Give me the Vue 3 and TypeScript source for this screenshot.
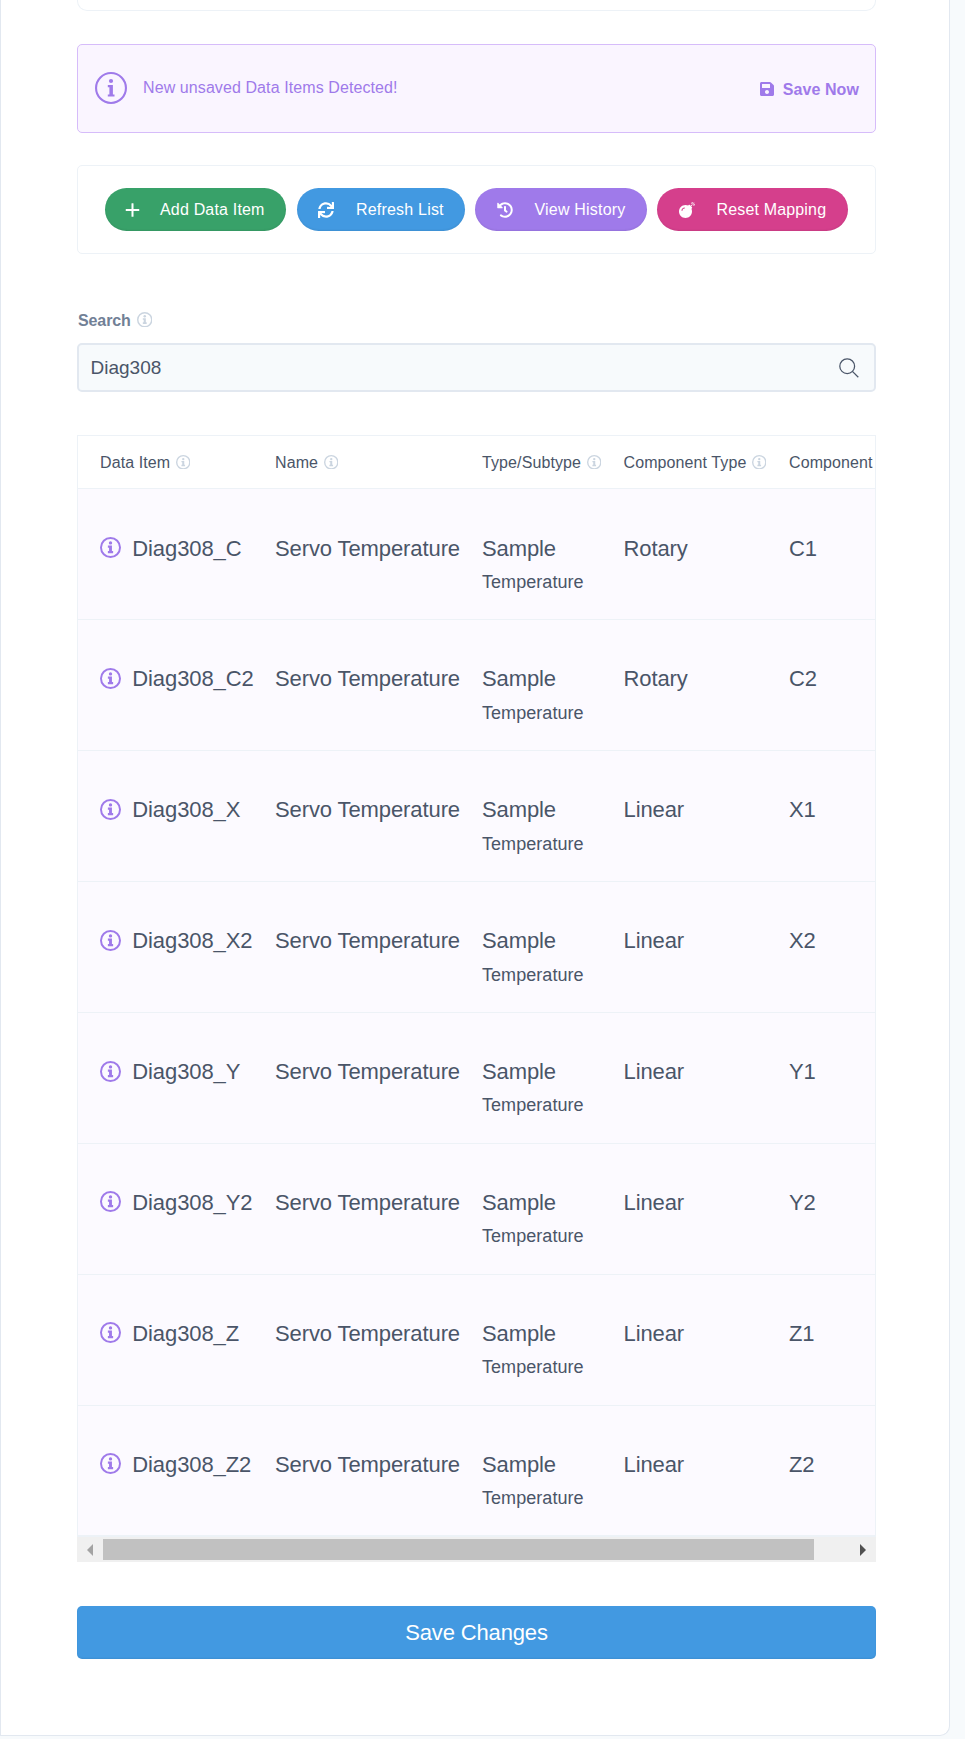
<script setup lang="ts">
import { h, type FunctionalComponent } from 'vue'

interface Action { label: string; icon: string; tone: string }
interface DataItem { id: string; type: string; component: string }

const icons: Record<string, string> = {
  plus: 'M416 226H254V64a12 12 0 0 0-12-12h-36a12 12 0 0 0-12 12v162H32a12 12 0 0 0-12 12v36a12 12 0 0 0 12 12h162v162a12 12 0 0 0 12 12h36a12 12 0 0 0 12-12V286h162a12 12 0 0 0 12-12v-36a12 12 0 0 0-12-12z',
  refresh: 'M440.65 12.57l4 82.77A247.16 247.16 0 0 0 255.83 8C134.73 8 33.91 94.92 12.29 209.82A12 12 0 0 0 24.09 224h49.05a12 12 0 0 0 11.67-9.26 175.91 175.91 0 0 1 317-56.94l-101.46-4.86a12 12 0 0 0-12.57 12v47.41a12 12 0 0 0 12 12H500a12 12 0 0 0 12-12V12a12 12 0 0 0-12-12h-47.37a12 12 0 0 0-11.98 12.57zM255.83 432a175.61 175.61 0 0 1-146-77.8l101.8 4.87a12 12 0 0 0 12.57-12v-47.4a12 12 0 0 0-12-12H12a12 12 0 0 0-12 12V500a12 12 0 0 0 12 12h47.35a12 12 0 0 0 12-12.6l-4.15-82.57A247.17 247.17 0 0 0 255.83 504c121.11 0 221.93-86.92 243.55-201.82a12 12 0 0 0-11.8-14.18h-49.05a12 12 0 0 0-11.67 9.26A175.86 175.86 0 0 1 255.83 432z',
  history: 'M504 255.531c.253 136.64-111.18 248.372-247.82 248.468-59.015.042-113.223-20.53-155.822-54.911-11.077-8.94-11.905-25.541-1.839-35.607l11.267-11.267c8.609-8.609 22.353-9.551 31.891-1.984C173.062 425.135 212.781 440 256 440c101.705 0 184-82.311 184-184 0-101.705-82.311-184-184-184-48.814 0-93.149 18.969-126.068 49.932l50.754 50.754c10.08 10.08 2.941 27.314-11.313 27.314H24c-8.837 0-16-7.163-16-16V38.627c0-14.254 17.234-21.393 27.314-11.314l49.372 49.372C129.209 34.136 189.552 8 256 8c136.81 0 247.747 110.78 248 247.531zm-180.912 78.784l9.823-12.63c8.138-10.463 6.253-25.542-4.21-33.679L288 256.349V152c0-13.255-10.745-24-24-24h-16c-13.255 0-24 10.745-24 24v135.651l65.409 50.874c10.463 8.137 25.541 6.253 33.679-4.21z',
  bomb: 'M440.5 88.5l-52 52L415 167c9.4 9.4 9.4 24.6 0 33.9l-17.4 17.4c11.8 26.1 18.4 55.1 18.4 85.6 0 114.9-93.1 208-208 208S0 418.9 0 304 93.1 96 208 96c30.5 0 59.5 6.6 85.6 18.4L311 97c9.4-9.4 24.6-9.4 33.9 0l26.5 26.5 52-52 17.1 17zM500 60h-24c-6.6 0-12 5.4-12 12s5.4 12 12 12h24c6.6 0 12-5.4 12-12s-5.4-12-12-12zM440 0c-6.6 0-12 5.4-12 12v24c0 6.6 5.4 12 12 12s12-5.4 12-12V12c0-6.6-5.4-12-12-12zm33.9 55l17-17c4.7-4.7 4.7-12.3 0-17-4.7-4.7-12.3-4.7-17 0l-17 17c-4.7 4.7-4.7 12.3 0 17 4.8 4.7 12.4 4.7 17 0zm-67.8 0c4.7 4.7 12.3 4.7 17 0 4.7-4.7 4.7-12.3 0-17l-17-17c-4.7-4.7-12.3-4.7-17 0-4.7 4.7-4.7 12.3 0 17l17 17zm67.8 34c-4.7-4.7-12.3-4.7-17 0-4.7 4.7-4.7 12.3 0 17l17 17c4.7 4.7 12.3 4.7 17 0 4.7-4.7 4.7-12.3 0-17l-17-17zM112 272c0-35.3 28.7-64 64-64 8.8 0 16-7.2 16-16s-7.2-16-16-16c-52.9 0-96 43.1-96 96 0 8.8 7.2 16 16 16s16-7.2 16-16z',
}

// Outlined circle with a serif "i" mark; inherits the text colour.
const InfoIcon: FunctionalComponent<{ weight?: number; bold?: boolean }> = (props) =>
  h('svg', { viewBox: '0 0 32 32', fill: 'currentColor' }, [
    h('circle', { cx: 16, cy: 16, r: 16 - (props.weight ?? 2) / 2, fill: 'none', stroke: 'currentColor', 'stroke-width': props.weight ?? 2 }),
    h('circle', { cx: 16, cy: 9, r: props.bold ? 2.6 : 2.1 }),
    h('path', {
      d: props.bold
        ? 'M12 13h6.2v8.4h1.8v3.2h-8v-3.2h1.8v-5.2H12z'
        : 'M12.8 13h5.1v9.4h1.6v2.2h-6.7v-2.2h1.6v-7.2h-1.6z',
    }),
  ])
InfoIcon.props = { weight: Number, bold: Boolean }

const actions: Action[] = [
  { label: 'Add Data Item', icon: 'plus', tone: 'green' },
  { label: 'Refresh List', icon: 'refresh', tone: 'blue' },
  { label: 'View History', icon: 'history', tone: 'purple' },
  { label: 'Reset Mapping', icon: 'bomb', tone: 'pink' },
]

const columns = ['Data Item', 'Name', 'Type/Subtype', 'Component Type', 'Component']

const items: DataItem[] = [
  { id: 'Diag308_C', type: 'Rotary', component: 'C1' },
  { id: 'Diag308_C2', type: 'Rotary', component: 'C2' },
  { id: 'Diag308_X', type: 'Linear', component: 'X1' },
  { id: 'Diag308_X2', type: 'Linear', component: 'X2' },
  { id: 'Diag308_Y', type: 'Linear', component: 'Y1' },
  { id: 'Diag308_Y2', type: 'Linear', component: 'Y2' },
  { id: 'Diag308_Z', type: 'Linear', component: 'Z1' },
  { id: 'Diag308_Z2', type: 'Linear', component: 'Z2' },
]
</script>

<template>
  <main class="card">
    <div class="previous-panel"></div>

    <section class="alert">
      <InfoIcon class="alert-icon" :weight="2.1" />
      <span class="alert-text">New unsaved Data Items Detected!</span>
      <a class="save-now">
        <svg class="save-icon" viewBox="0 32 448 448"><path fill="currentColor" d="M433.941 129.941l-83.882-83.882A48 48 0 0 0 316.118 32H48C21.49 32 0 53.49 0 80v352c0 26.51 21.49 48 48 48h352c26.51 0 48-21.49 48-48V163.882a48 48 0 0 0-14.059-33.941zM224 416c-35.346 0-64-28.654-64-64 0-35.346 28.654-64 64-64s64 28.654 64 64c0 35.346-28.654 64-64 64zm96-304.52V212c0 6.627-5.373 12-12 12H76c-6.627 0-12-5.373-12-12V108c0-6.627 5.373-12 12-12h228.52c3.183 0 6.235 1.264 8.485 3.515l3.48 3.48A11.996 11.996 0 0 1 320 111.48z" /></svg>
        <span>Save Now</span>
      </a>
    </section>

    <section class="toolbar">
      <button v-for="a in actions" :key="a.label" class="pill" :class="a.tone">
        <svg class="pill-icon" :viewBox="a.icon === 'plus' ? '0 32 448 448' : '0 0 512 512'"><path fill="currentColor" :d="icons[a.icon]" /></svg>
        <span>{{ a.label }}</span>
      </button>
    </section>

    <div class="search-label"><span>Search</span><InfoIcon class="label-icon" :weight="3" bold /></div>
    <div class="search-box">
      <span>Diag308</span>
      <svg class="search-icon" viewBox="0 0 20 20" fill="none" stroke="currentColor" stroke-width="1.25"><circle cx="8.2" cy="8.2" r="7.4" /><path d="M13.4 13.4L19.3 19.3" /></svg>
    </div>

    <section class="table">
      <div class="row head">
        <div v-for="c in columns" :key="c" class="head-cell">
          <span>{{ c }}</span><InfoIcon class="head-icon" :weight="3" bold />
        </div>
      </div>
      <div v-for="item in items" :key="item.id" class="row item">
        <div class="name-cell"><InfoIcon class="row-icon" :weight="3" bold /><span>{{ item.id }}</span></div>
        <div>Servo Temperature</div>
        <div>Sample<small>Temperature</small></div>
        <div>{{ item.type }}</div>
        <div>{{ item.component }}</div>
      </div>
    </section>
    <div class="scrollbar">
      <span class="arrow left"></span><span class="thumb"></span><span class="arrow right"></span>
    </div>

    <button class="save">Save Changes</button>
  </main>
</template>

<style>
body { background: #f7fafc; }
</style>

<style scoped>
* { box-sizing: border-box; }
.card {
  width: 950px;
  height: 1736px;
  padding: 0 73px 0 76px;
  background: #fff;
  border: 1px solid #e2e8f0;
  border-top: 0;
  border-radius: 0 0 10px 0;
  font-family: "Liberation Sans", Arial, sans-serif;
  font-size: 16px;
  color: #4a5568;
}
.previous-panel {
  height: 11px;
  border: 1px solid #edf2f7;
  border-top: 0;
  border-radius: 0 0 10px 10px;
}
.alert {
  display: flex;
  align-items: center;
  height: 89px;
  margin-top: 33px;
  padding: 0 16px;
  background: #faf5ff;
  border: 1px solid #d6bcfa;
  border-radius: 5px;
  color: #9f7aea;
}
.alert-icon { width: 32px; height: 32px; margin: -1px 0 0 .5px; }
.alert-text { margin: -2px 0 0 16.5px; letter-spacing: .09px; }
.save-now { display: flex; align-items: center; margin-left: auto; padding-top: 2px; font-weight: 700; letter-spacing: .08px; }
.save-icon { width: 14px; height: 14px; margin: -1px 9px 0 0; }
.toolbar {
  display: flex;
  align-items: center;
  gap: 10px;
  height: 89px;
  margin-top: 32px;
  padding: 0 27px;
  border: 1px solid #edf2f7;
  border-radius: 5px;
}
.pill {
  display: flex;
  align-items: center;
  height: 43px;
  padding: 0 0 0 21px;
  border: 0;
  border-radius: 22px;
  color: #fff;
  font: inherit;
  white-space: nowrap;
  box-shadow: inset 0 -1px 2px rgba(0, 0, 0, .07);
}
.pill-icon { width: 16px; height: 16px; margin-right: 22px; }
.green { width: 181px; padding-left: 20px; background: #38a169; letter-spacing: .18px; }
.green .pill-icon { width: 15px; margin-right: 20px; }
.blue { width: 168px; background: #4299e1; margin-left: 1px; letter-spacing: .2px; }
.purple { width: 172px; padding-left: 22px; background: #9f7aea; letter-spacing: .2px; }
.purple .pill-icon, .pink .pill-icon { margin-right: 21.5px; }
.pink { width: 191px; padding-left: 22px; background: #d53f8c; letter-spacing: .16px; }
.search-label {
  display: flex;
  align-items: center;
  height: 20px;
  margin: 57px 0 0 1px;
  color: #718096;
  font-weight: 700;
  letter-spacing: -.1px;
}
.label-icon { width: 15.5px; height: 15.5px; margin: -3px 0 0 6px; color: #cbd5e0; }
.search-box {
  display: flex;
  align-items: center;
  justify-content: space-between;
  height: 49px;
  margin-top: 12px;
  padding: 0 15.5px 0 11.5px;
  background: #f7fafc;
  border: 2px solid #e2e8f0;
  border-radius: 5px;
  font-size: 19px;
}
.search-icon { width: 20px; height: 20px; }
.table { margin-top: 43px; height: 1102px; border: 1px solid #edf2f7; overflow: hidden; }
.row {
  display: grid;
  grid-template-columns: 175px 207px 141.5px 165.5px 200px;
  width: 1000px;
  padding-left: 22px;
  border-bottom: 1px solid #edf2f7;
}
.head { height: 53.45px; align-items: center; }
.head-cell { display: flex; align-items: center; white-space: nowrap; letter-spacing: .1px; }
.head-cell span { padding-top: 1.5px; }
.head-icon { width: 14.5px; height: 14.5px; margin-left: 5.5px; color: #cbd5e0; }
.item { height: 130.88px; padding-top: 42.1px; background: #fcfaff; font-size: 22px; line-height: 34px; letter-spacing: -.1px; }
.name-cell { display: flex; align-items: flex-start; }
.row-icon { width: 21px; height: 21px; margin: 5.5px 11.3px 0 0; color: #9f7aea; }
.item small { display: block; margin-top: -.55px; font-size: 18px; line-height: 34px; letter-spacing: .05px; }
.scrollbar { display: flex; align-items: center; height: 25px; padding: 0 10px; background: #f0f0f0; }
.thumb { width: 711px; height: 21px; margin: 0 46px 0 10px; background: #c1c1c1; }
.arrow { border: solid transparent; border-width: 6px 0; }
.left { border-right: 6px solid #a3a3a3; }
.right { border-left: 6px solid #505050; }
.save {
  display: block;
  width: 100%;
  height: 53px;
  margin-top: 44px;
  padding: 0;
  border: 0;
  border-radius: 5px;
  background: #4299e1;
  color: #fff;
  font: inherit;
  font-size: 22px;
  letter-spacing: -.15px;
  box-shadow: inset 0 -1px 2px rgba(0, 0, 0, .07);
}
</style>
